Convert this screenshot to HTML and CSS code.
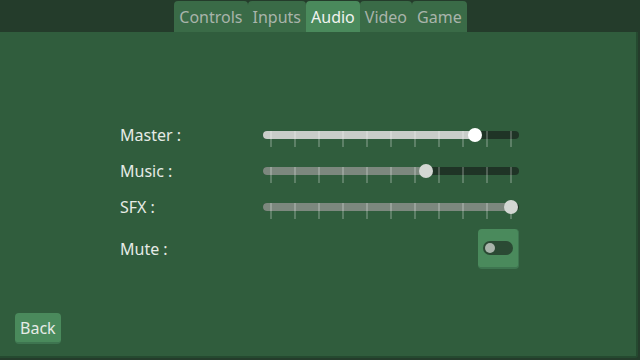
FILE: index.html
```html
<!DOCTYPE html>
<html lang="en">
<head>
  <meta charset="UTF-8" />
  <meta name="viewport" content="width=device-width, initial-scale=1" />
  <title>Options - Audio</title>
  <link rel="stylesheet" href="styles.css">
</head>
<body>
  <nav class="tabs">
    <div class="tab">Controls</div>
    <div class="tab">Inputs</div>
    <div class="tab active">Audio</div>
    <div class="tab">Video</div>
    <div class="tab">Game</div>
  </nav>

  <main class="panel">
    <div class="settings">
      <div class="row">
        <span class="label">Master :</span>
        <div class="slider focus">
          <div class="track"><div class="fill" style="width: 212px"></div></div>
          <div class="ticks"><i></i><i></i><i></i><i></i><i></i><i></i><i></i><i></i><i></i><i></i><i></i></div>
          <div class="grab" style="left: 205px"></div>
        </div>
      </div>
      <div class="row">
        <span class="label">Music :</span>
        <div class="slider">
          <div class="track"><div class="fill" style="width: 163px"></div></div>
          <div class="ticks"><i></i><i></i><i></i><i></i><i></i><i></i><i></i><i></i><i></i><i></i><i></i></div>
          <div class="grab" style="left: 156px"></div>
        </div>
      </div>
      <div class="row">
        <span class="label">SFX :</span>
        <div class="slider">
          <div class="track"><div class="fill" style="width: 248px"></div></div>
          <div class="ticks"><i></i><i></i><i></i><i></i><i></i><i></i><i></i><i></i><i></i><i></i><i></i></div>
          <div class="grab" style="left: 241px"></div>
        </div>
      </div>
      <div class="row mute">
        <span class="label">Mute :</span>
        <div class="toggle-cell">
          <button class="toggle"><span class="switch"><span class="knob"></span></span></button>
        </div>
      </div>
    </div>

    <div class="footer">
      <button class="btn">Back</button>
    </div>
  </main>
</body>
</html>
```

FILE: styles.css
```css
:root {
  --bg: #243c2b;
  --panel: #305d3d;
  --panel-edge: #254a30;
  --tab: #3a6b47;
  --tab-active: #4a8a5c;
  --text: #e6ebe6;
  --text-dim: #a9b4ab;
}

body {
  margin: 0;
  width: 640px;
  height: 360px;
  overflow: hidden;
  background: var(--bg);
  font-family: "Noto Sans", "Open Sans", sans-serif;
  font-size: 16px;
  color: var(--text);
  display: flex;
  flex-direction: column;
}

/* Tab bar */
.tabs {
  display: flex;
  justify-content: center;
  padding-top: 1px;
  height: 31px;
  padding-left: 1px;
}

.tab {
  background: var(--tab);
  color: var(--text-dim);
  padding: 1px 5px 0 5px;
  line-height: 30px;
  border-radius: 4px 4px 0 0;
}

.tab.active {
  background: var(--tab-active);
  color: #f0f3f0;
}

/* Main panel */
.panel {
  width: 636px;
  height: 324px;
  background: var(--panel);
  border-right: 2px solid var(--panel-edge);
  border-bottom: 2px solid var(--panel-edge);
  border-radius: 0 0 3px 0;
  display: flex;
  flex-direction: column;
}

.settings {
  padding: 85px 0 0 120px;
  display: flex;
  flex-direction: column;
}

.row {
  display: grid;
  grid-template-columns: 143px 256px;
  height: 36px;
  align-items: center;
}

.label {
  line-height: 20px;
  margin-top: -1px;
}

/* Slider */
.slider {
  position: relative;
  height: 16px;
  margin-top: 8px;
}

.track {
  height: 8px;
  border-radius: 4px;
  background: #1f3426;
  overflow: hidden;
}

.fill {
  height: 100%;
  background: #7c887e;
}

.slider.focus .fill {
  background: #c9cdc9;
}

.ticks {
  position: absolute;
  top: 0;
  left: 7px;
  right: 7px;
  display: flex;
  justify-content: space-between;
}

.ticks i {
  width: 2px;
  height: 16px;
  background: rgba(255, 255, 255, 0.22);
}

.grab {
  position: absolute;
  top: -3px;
  width: 14px;
  height: 14px;
  border-radius: 50%;
  background: #d3d7d3;
}

.slider.focus .grab {
  background: #ffffff;
}

/* Mute toggle */
.row.mute {
  height: 40px;
  margin-top: 4px;
}

.toggle-cell {
  display: flex;
  justify-content: flex-end;
}

.toggle {
  width: 41px;
  height: 40px;
  padding: 0;
  border: none;
  border-bottom: 2px solid #3e7550;
  border-right: 1px solid #3e7550;
  border-radius: 4px;
  background: var(--tab-active);
  display: flex;
  align-items: center;
  justify-content: center;
}

.switch {
  width: 30px;
  height: 14px;
  border-radius: 7px;
  background: #2b4a34;
  display: flex;
  align-items: center;
  padding-left: 2px;
  box-sizing: border-box;
}

.knob {
  width: 10px;
  height: 10px;
  border-radius: 50%;
  background: #a9b4ab;
}

/* Footer */
.footer {
  margin-top: auto;
  padding: 0 0 12px 15px;
}

.btn {
  font-family: inherit;
  font-size: 16px;
  color: var(--text);
  background: var(--tab-active);
  border: none;
  border-bottom: 2px solid #3e7550;
  border-radius: 4px;
  height: 31px;
  padding: 0 5px;
  line-height: 28px;
}
```
